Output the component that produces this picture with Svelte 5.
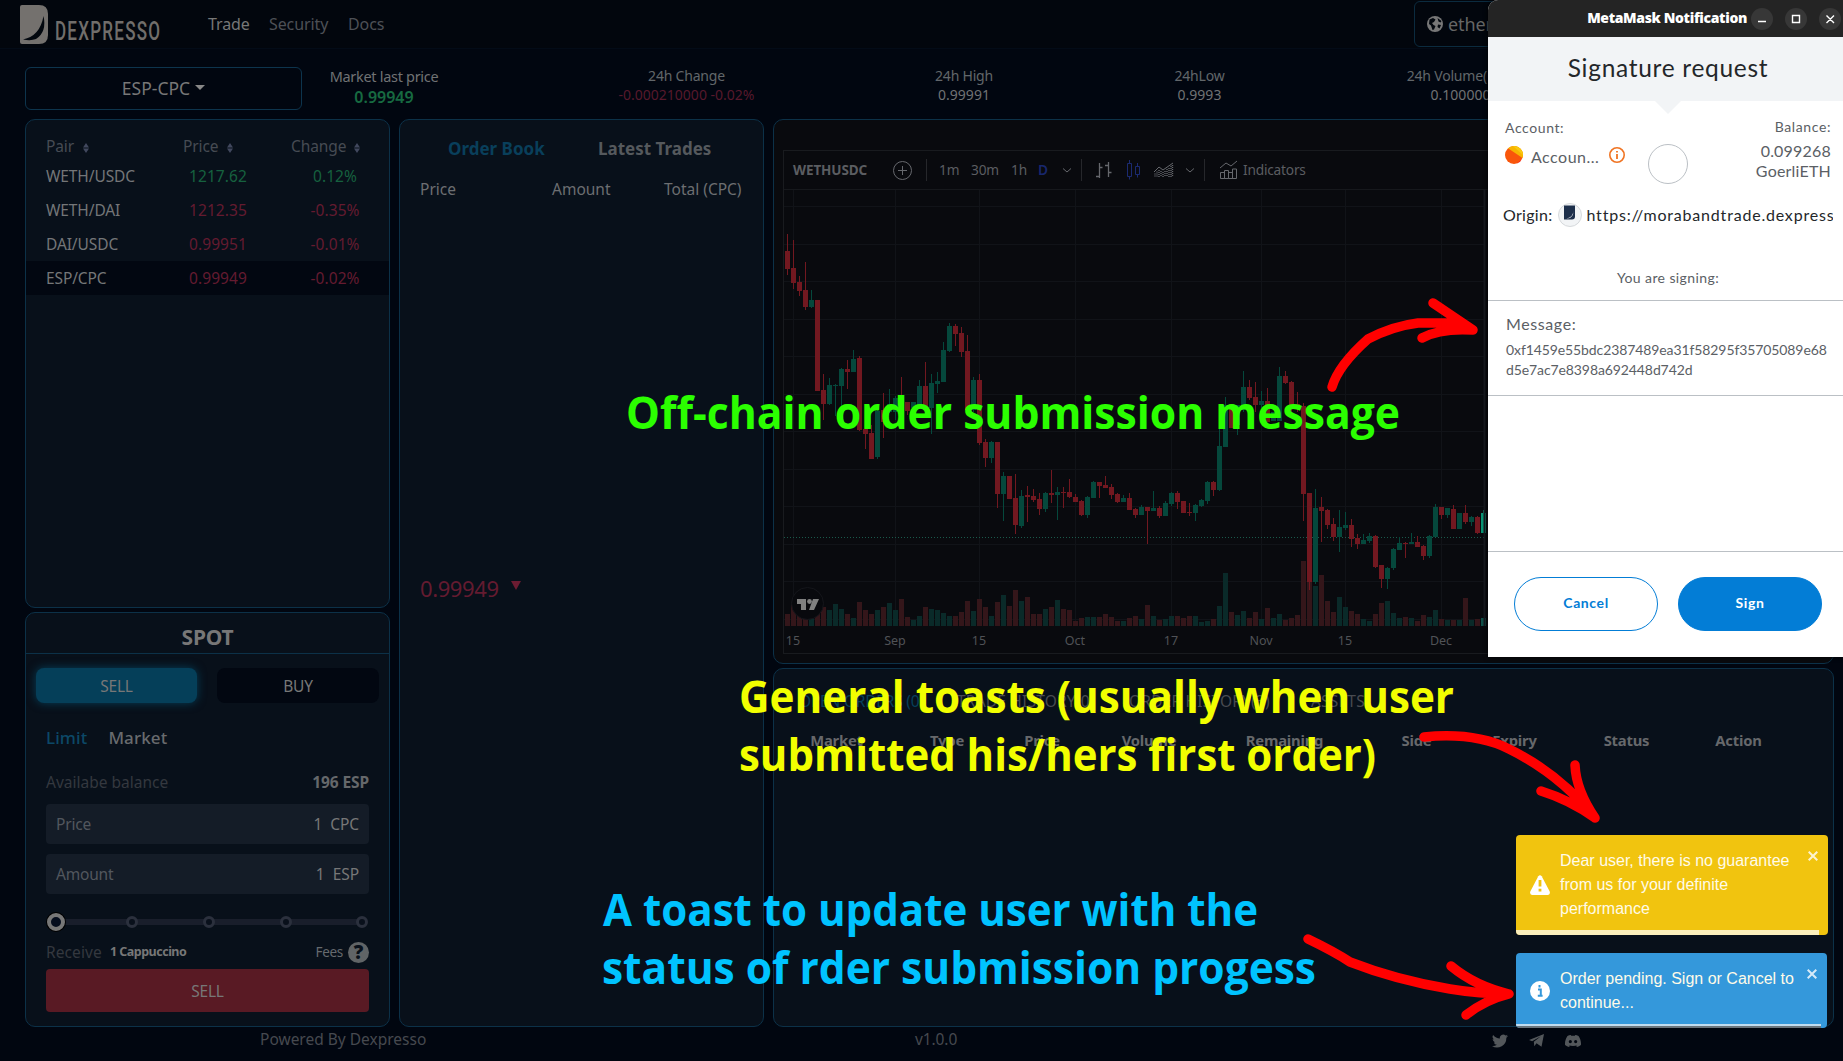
<script>
  const pairs = [
    { name: 'WETH/USDC', price: '1217.62', change: '0.12%', up: true },
    { name: 'WETH/DAI', price: '1212.35', change: '-0.35%' },
    { name: 'DAI/USDC', price: '0.99951', change: '-0.01%' },
    { name: 'ESP/CPC', price: '0.99949', change: '-0.02%', active: true }
  ];
  const orderColumns = ['Market', 'Type', 'Price', 'Volume', 'Remaining', 'Side', 'Expiry', 'Status', 'Action'];
  const axisLabels = [[1, '15'], [18, 'Sep'], [32, '15'], [48, 'Oct'], [64, '17'], [79, 'Nov'], [93, '15'], [109, 'Dec']];

  // Each candle: direction, high, body top, body bottom, low, volume bar height.
  const candles = `r 234 251 269 275 12|r 240 268 283 289 21|r 276 282 291 296 15|r 262 290 307 310 15|g 290 300 307 308 12|r 300 300 391 391 18|r 374 390 404 420 19|g 378 385 404 405 16|g 384 385 386 416 22|g 368 369 386 407 17|r 360 369 372 389 12|g 350 359 372 372 8|r 356 358 430 431 24|r 429 429 434 449 16|r 425 433 459 459 12|g 410 411 457 459 16|r 393 410 422 438 19|g 389 404 412 413 23|g 396 398 412 420 16|r 377 398 408 412 27|r 402 402 411 415 9|g 402 402 408 408 6|g 380 386 405 405 10|r 362 386 407 408 19|g 374 383 408 434 17|g 372 381 384 393 16|g 342 350 382 382 13|g 323 326 351 352 10|r 324 326 334 346 10|r 327 333 352 357 14|r 335 351 410 412 25|g 377 380 410 412 15|r 374 380 443 445 27|r 439 442 458 467 19|g 441 442 458 463 10|r 442 442 494 508 24|g 472 476 494 521 31|r 476 476 499 499 20|r 474 498 525 534 36|g 490 496 526 528 25|r 486 495 497 522 29|r 489 496 500 502 12|r 493 499 509 515 12|g 492 493 509 512 17|r 470 493 495 503 19|g 487 492 495 520 26|r 487 492 493 508 17|r 479 492 497 498 16|r 494 497 502 502 5|r 500 501 515 516 8|g 496 497 515 518 9|g 481 482 498 498 9|r 482 482 486 498 9|r 476 485 488 488 12|r 484 487 495 499 9|r 493 494 502 503 5|g 495 498 502 502 5|r 493 498 510 510 8|r 508 509 515 518 10|g 505 507 515 515 7|r 507 507 511 544 21|g 491 508 511 511 10|r 506 508 516 518 6|g 501 503 516 516 7|g 492 493 504 506 10|r 491 493 502 509 10|r 501 501 513 513 8|r 503 512 513 516 10|g 504 505 513 521 10|g 499 500 506 507 4|g 481 482 501 504 5|r 481 482 490 496 7|g 428 446 490 491 20|g 397 405 447 447 53|r 404 404 428 428 14|g 405 405 425 435 11|g 371 387 410 412 15|r 380 387 398 400 8|r 382 397 405 412 14|g 391 401 405 408 7|r 388 401 422 422 18|g 412 412 421 421 8|g 367 376 421 421 12|r 371 376 383 384 6|r 381 382 405 412 8|r 392 404 407 412 11|r 403 406 494 521 65|r 493 493 582 590 48|g 489 508 582 584 40|r 497 507 511 542 51|r 509 510 525 529 25|r 518 524 537 541 14|g 510 527 537 552 29|g 512 525 528 530 19|r 519 525 539 547 15|r 534 538 544 549 12|g 534 540 544 544 7|g 533 536 541 543 5|r 535 536 567 568 12|r 565 565 579 588 23|g 567 568 579 589 25|g 548 549 568 570 13|g 537 543 550 550 8|r 542 543 544 558 9|g 533 542 544 544 8|r 536 542 547 547 5|r 545 546 556 560 11|g 535 536 556 558 9|g 504 507 537 537 16|r 507 507 515 519 7|g 508 508 515 518 6|r 505 509 529 529 6|g 513 513 529 529 6|r 505 513 522 524 28|g 516 517 522 526 6|r 516 517 533 534 7|n 510 513 533 533 8`
    .split('|')
    .map((row, i) => {
      const [kind, ...values] = row.split(' ');
      const [high, top, bottom, low, volume] = values.map(Number);
      return { kind, high, top, bottom, low, volume, x: 787.5 + 6 * i };
    });
  const gridRows = Array.from({ length: 12 }, (_, i) => Math.round(206 + 37.5 * i) + 0.5);
</script>

{#snippet sort()}
  <svg class="sort" width="6" height="10" viewBox="0 0 6 10"><path d="M0 4.4 3 0l3 4.4zM0 5.6 3 10l3-4.4z" /></svg>
{/snippet}

<div class="app">
  <header>
    <svg class="mark" width="28" height="39" viewBox="0 0 28 39">
      <path d="M2 0h17q9 0 9 9v21q0 9-9 9H2q-2 0-2-2V2q0-2 2-2z" fill="#74716e" />
      <path d="M23.5 11Q20 31 3 34.5q8 1.500 13-.5Q27 27 23.500 11z" fill="#02070e" />
    </svg>
    <div class="wordmark"><span>DEXPRESSO</span></div>
    <nav><a class="on">Trade</a><a>Security</a><a>Docs</a></nav>
    <div class="network">
      <svg width="16" height="16" viewBox="0 0 16 16"><circle cx="8" cy="8" r="8" fill="#777" /><path d="M2.500 3.500 6 2l2.500 1.500L7 6 5 7l1.500 2 2 1L7 13.500 5.500 14 4 9.500 2 8zM10.500 2l4 3-1 1.500-2-1zM11 8.500l3 .5-1.500 3.500L10.500 11z" fill="#02070e" /></svg>
      <span>ethereum</span>
    </div>
  </header>

  <section class="stats">
    <div class="select"><span>ESP-CPC</span><i></i></div>
    <div class="stat last"><span>Market last price</span><b>0.99949</b></div>
    <div class="stat change"><span>24h Change</span><em>-0.000210000 -0.02%</em></div>
    <div class="stat"><span>24h High</span><em>0.99991</em></div>
    <div class="stat"><span>24hLow</span><em>0.9993</em></div>
    <div class="stat volume"><span>24h Volume(ESP)</span><em>0.100000</em></div>
  </section>

  <main>
    <div class="column">
      <section class="panel pairs">
        <div class="row head"><span>Pair {@render sort()}</span><span>Price {@render sort()}</span><span>Change {@render sort()}</span></div>
        {#each pairs as pair}
          <div class="row" class:up={pair.up} class:active={pair.active}>
            <span>{pair.name}</span><span>{pair.price}</span><span>{pair.change}</span>
          </div>
        {/each}
      </section>

      <section class="panel spot">
        <h2>SPOT</h2>
        <div class="sides"><button class="sell">SELL</button><button>BUY</button></div>
        <div class="form">
          <div class="kinds"><span class="on">Limit</span><span>Market</span></div>
          <div class="line balance"><span>Availabe balance</span><b>196 ESP</b></div>
          <div class="field"><span>Price</span><em>1&nbsp; CPC</em></div>
          <div class="field"><span>Amount</span><em>1&nbsp; ESP</em></div>
          <svg class="slider" width="323" height="22" viewBox="46 911 323 22">
            <path d="M56 922H362" stroke="#191e2b" stroke-width="6" />
            {#each [132, 209, 286, 362] as x}
              <circle cx={x} cy="922" r="4.500" fill="#09101b" stroke="#2b303d" stroke-width="3" />
            {/each}
            <circle cx="56" cy="922" r="7" fill="#020710" stroke="#000" stroke-width="6" />
            <circle cx="56" cy="922" r="7" fill="#050d1d" stroke="#777" stroke-width="4" />
          </svg>
          <div class="line receive"><span>Receive</span><b>1 Cappuccino</b><em>Fees</em><i>?</i></div>
          <button class="submit">SELL</button>
        </div>
      </section>
    </div>

    <section class="panel book">
      <div class="tabs"><span class="on">Order Book</span><span>Latest Trades</span></div>
      <div class="heads"><span>Price</span><span>Amount</span><span>Total (CPC)</span></div>
      <div class="mid"><span>0.99949</span><i></i></div>
    </section>

    <div class="column">
      <section class="panel market">
        <div class="chart">
          <div class="toolbar">
            <b>WETHUSDC</b>
            <svg width="512" height="38" viewBox="882 151 512 38" fill="none" stroke="#66686d">
              <circle cx="902.5" cy="170.500" r="9" /><path d="M898 170.500h9M902.500 166v9" />
              <path d="M926.500 159v22M1081.500 159v22M1204.500 159v22" stroke="#26272b" />
              <path d="m1063 168.500 4 3.500 4-3.500M1186 168.500l4 3.500 4-3.500" />
              <path d="M1099.500 163v15M1096 176.500h3.500M1099.500 167.500h3M1108.500 162v15M1105 165.500h3.500M1108.500 172.500h3" stroke-width="1.300" />
              <g stroke="#1b2a70"><path d="M1127.500 163.500h4v13h-4zM1129.500 160v3.500M1129.500 176.500v3M1135.500 166.500h4v8h-4zM1137.500 163v3.500M1137.500 174.500v3" /></g>
              <path d="m1154 172 5-5 4 3 10-7" />
              <path d="M1155 173.500v3.500M1157 171.500v5.500M1159 170v7M1161 171v6M1163 172v5M1165 171v6M1167 169v8M1169 168v9M1171 166v11M1172.500 165v12" stroke-dasharray="1 1" stroke-width="1.400" />
              <path d="m1220 168 6-5 5 3 6-5M1220.500 178.500v-6h4v6zM1224.500 178.500v-8h4v8zM1228.500 178.500v-6h4v6zM1232.500 178.500v-9.500h4v9.500z" />
            </svg>
            <div class="tools"><span>1m</span><span>30m</span><span>1h</span><span class="day">D</span><span>Indicators</span></div>
          </div>
          <svg class="plot" width="704" height="436" viewBox="784 190 704 436">
            {#each gridRows as y}<path class="grid" d="M784 {y}H1484" />{/each}
            {#each axisLabels as [i]}<path class="grid" d="M{787.5 + 6 * i} 190V626" />{/each}
            <path d="M784 537.500H1484" stroke="#1a5a4b" stroke-dasharray="1 2" />
            {#each candles as c}
              <rect class="vol {c.kind}" x={c.x - 2.5} y={626 - c.volume} width="5" height={c.volume} />
            {/each}
            {#each candles as c}
              <g class="candle {c.kind}">
                <rect x={c.x - 0.5} y={c.high} width="1" height={c.low - c.high} />
                <rect x={c.x - 2.5} y={c.top} width="5" height={Math.max(1, c.bottom - c.top)} />
              </g>
            {/each}
            <circle cx="807.5" cy="603.500" r="16" fill="#08090d" stroke="#15161b" />
            <path d="M797 599h9v11h-5v-6h-4zM813 599h6l-5 11h-5z" fill="#808080" /><circle cx="809.5" cy="601.500" r="2.400" fill="#808080" />
            <path d="M1484.500 190V627" stroke="#17191f" stroke-width="2" />
          </svg>
          <svg class="axis" width="704" height="28" viewBox="784 626 704 28">
            {#each axisLabels as [i, label]}<text x={787 + 6 * i} y="645">{label}</text>{/each}
          </svg>
        </div>
      </section>

      <section class="panel orders">
        <div class="tabs"><span class="on">OPEN ORDERS (0)</span><span>TRADE HISTORY(0)</span><span>ORDER HISTORY(3)</span><span>ASSETS</span></div>
        <div class="heads">{#each orderColumns as title}<span>{title}</span>{/each}</div>
      </section>
    </div>
  </main>

  <footer>
    <span class="powered">Powered By Dexpresso</span>
    <span class="version">v1.0.0</span>
    <div class="social">
      <svg width="16" height="16" viewBox="0 0 24 24"><path d="M24 4.600a10 10 0 0 1-2.800.8 5 5 0 0 0 2.200-2.700c-1 .5-2 1-3.100 1.200a4.900 4.900 0 0 0-8.400 4.500A14 14 0 0 1 1.700 3.100a4.900 4.900 0 0 0 1.500 6.600c-.8 0-1.500-.2-2.200-.6 0 2.300 1.600 4.400 3.900 4.900-.7.200-1.500.2-2.200.1a4.900 4.900 0 0 0 4.600 3.400A10 10 0 0 1 0 19.500a14 14 0 0 0 21.500-12.400c1-.7 1.800-1.600 2.500-2.500z" /></svg>
      <svg width="15" height="15" viewBox="0 0 24 24"><path d="M24 1.500 20 22l-8-5.500L8.500 21l-.8-7L19 5 5 13 0 11z" /></svg>
      <svg width="16" height="16" viewBox="0 0 24 24"><path fill-rule="evenodd" d="M20.300 4.400A19 19 0 0 0 15.400 3l-.6 1.200a18 18 0 0 0-5.500 0L8.600 3a19 19 0 0 0-4.900 1.400C.5 9-.3 13.600.1 18.100A20 20 0 0 0 6.100 21l1.200-2-2-1c4.300 2.100 9.100 2.100 13.400 0l-2 1 1.200 2a20 20 0 0 0 6-3c.5-5.100-.8-9.600-3.600-13.600zM8 15.300a2.300 2.300 0 1 1 0-4.800 2.300 2.300 0 0 1 0 4.800zm8 0a2.300 2.300 0 1 1 0-4.800 2.300 2.300 0 0 1 0 4.800z" /></svg>
    </div>
  </footer>

  <aside class="wallet">
    <div class="titlebar">
      <b>MetaMask Notification</b>
      <svg width="92" height="24" viewBox="0 0 92 24" fill="none" stroke="#fff" stroke-width="1.400">
        <g fill="#373737" stroke="none"><circle cx="12" cy="12" r="11" /><circle cx="46" cy="12" r="11" /><circle cx="80" cy="12" r="11" /></g>
        <path d="M8 14.500h8M42.500 8.500h7v7h-7zM76.500 8.500l7.500 7.500M84 8.500 76.500 16" />
      </svg>
    </div>
    <h1>Signature request</h1>
    <div class="account">
      <div class="who">
        <span>Account:</span>
        <div>
          <svg width="18" height="18" viewBox="0 0 18 18"><circle cx="9" cy="9" r="9" fill="#f9560b" /><path d="M3 2.300A9 9 0 0 1 17.500 12z" fill="#f7b500" /><path d="M9 0a9 9 0 0 1 9 9L8 0z" fill="#f9ca10" /><path d="M17 13a9 9 0 0 1-5 4.500z" fill="#f4222d" /></svg>
          <em>Accoun...</em>
          <svg width="18" height="18" viewBox="0 0 18 18" fill="none" stroke="#f07423" stroke-width="1.600"><circle cx="9" cy="9" r="7.200" /><path d="M9 8v5M9 5v1.600" stroke-width="1.800" /></svg>
        </div>
      </div>
      <div class="ring"></div>
      <div class="funds"><span>Balance:</span><em>0.099268</em><em>GoerliETH</em></div>
    </div>
    <div class="origin">
      <span>Origin:</span>
      <svg width="24" height="24" viewBox="0 0 24 24"><circle cx="12" cy="12" r="11.500" fill="#f2f4f6" stroke="#d6d9dc" /><path d="M6 2.500h11v11q0 3-3 3H6z" fill="#1d2f4b" /><path d="M15.500 7q0 7-7 8.500 7 .5 7-8.500z" fill="#fff" /></svg>
      <span class="url">https://morabandtrade.dexpress</span>
    </div>
    <p class="signing">You are signing:</p>
    <div class="message"><span>Message:</span><p>0xf1459e55bdc2387489ea31f58295f35705089e68<br />d5e7ac7e8398a692448d742d</p></div>
    <div class="actions"><button>Cancel</button><button class="sign">Sign</button></div>
  </aside>

  <div class="toasts">
    <div class="toast warning">
      <svg width="20" height="20" viewBox="0 0 20 20"><path d="M8.300 1.200Q10-.8 11.700 1.200L19.700 16.500Q20.500 19.500 18 20H2Q-.5 19.500.3 16.500z" fill="#fff" /><path d="M10 5v6.500M10 13.800v2.800" stroke="#f1c40f" stroke-width="2.800" /></svg>
      <p>Dear user, there is no guarantee<br />from us for your definite<br />performance</p>
      <svg class="close" width="10" height="10" viewBox="0 0 10 10"><path d="m.7.7 8.600 8.600M9.300.7.7 9.300" /></svg>
      <i></i>
    </div>
    <div class="toast pending">
      <svg width="20" height="20" viewBox="0 0 20 20"><circle cx="10" cy="10" r="10" fill="#fff" /><path d="M8 8.500h2.800v6M7.800 14.800h4.800M9.500 4v2.600" fill="none" stroke="#3498db" stroke-width="2" /></svg>
      <p>Order pending. Sign or Cancel to<br />continue...</p>
      <svg class="close" width="10" height="10" viewBox="0 0 10 10"><path d="m.7.7 8.600 8.600M9.300.7.7 9.300" /></svg>
      <i></i>
    </div>
  </div>

  <svg class="notes" width="1843" height="1061" viewBox="0 0 1843 1061">
    <g fill="#2bff00"><text x="626" y="429" textLength="774" lengthAdjust="spacingAndGlyphs">Off-chain order submission message</text></g>
    <g fill="#f2ff00">
      <text x="739" y="713" textLength="715" lengthAdjust="spacingAndGlyphs">General toasts (usually when user</text>
      <text x="739" y="771" textLength="637" lengthAdjust="spacingAndGlyphs">submitted his/hers first order)</text>
    </g>
    <g fill="#00c3ff">
      <text x="603" y="926" textLength="655" lengthAdjust="spacingAndGlyphs">A toast to update user with the</text>
      <text x="602" y="984" textLength="714" lengthAdjust="spacingAndGlyphs">status of rder submission progess</text>
    </g>
    <g class="arrows">
      <path d="M1332 387C1337 370 1350 355 1368 339Q1393 326 1418 323H1453L1473 330M1433 303 1473 330Q1440 328 1422 338" />
      <path d="M1424 737Q1475 732 1509 749 1560 774 1595 818M1575 765Q1576 790 1595 818M1541 791Q1570 800 1595 818" />
      <path d="M1308 939Q1335 952 1350 962 1396 980 1450 989 1480 994 1509 994M1451 966Q1475 986 1509 994 1485 1000 1466 1015" />
    </g>
  </svg>
</div>

<style>
  :global(body) { margin: 0; background: #010610; }
  .app { position: relative; width: 1843px; height: 1061px; overflow: hidden; display: flex; flex-direction: column; background: #010610; color: #747678; font: 15.5px/20px "Noto Sans", "Open Sans", sans-serif; letter-spacing: -0.2px; }
  em, i { font-style: normal; }
  h1, h2, p { margin: 0; }
  button { border: 0; padding: 0; font: inherit; letter-spacing: inherit; color: inherit; }
  svg { display: block; flex: none; }

  header { height: 49px; flex: none; display: flex; align-items: flex-start; padding-left: 20px; background: #02060d; border-bottom: 1px solid #030b17; box-sizing: border-box; }
  .mark { margin-top: 5px; }
  .wordmark { width: 105px; margin: 20px 0 0 7px; height: 24px; }
  .wordmark span { display: block; width: 153px; font: 500 25px/24px Roboto, sans-serif; letter-spacing: 1.8px; transform: scaleX(0.682); transform-origin: left; color: #716e6b; }
  nav { display: grid; grid-template-columns: 61px 79px 40px; margin: 14px 0 0 48px; font-size: 16px; letter-spacing: -0.1px; color: #4d5056; }
  nav .on { color: #777; }
  .network { box-sizing: border-box; width: 200px; height: 46px; margin: 1px 0 0 1026px; display: flex; align-items: center; gap: 5px; padding-left: 12px; border: 1px solid #0b2b3f; border-radius: 6px; font-size: 18px; letter-spacing: -0.1px; color: #666; }

  .stats { flex: none; height: 70px; display: grid; grid-template-columns: 277px 164px 441px 114px 357px 165px; padding-left: 25px; }
  .select { box-sizing: border-box; height: 43px; margin-top: 18px; padding-bottom: 2px; border: 1px solid #0d344d; border-radius: 6px; display: flex; align-items: center; justify-content: center; gap: 5px; font-size: 17.500px; letter-spacing: 0; color: #777; }
  .select i { border: 5.500px solid transparent; border-top-color: #888; border-bottom: 0; }
  .stat { display: flex; flex-direction: column; align-items: center; padding-top: 17px; font-size: 14px; line-height: 19px; letter-spacing: -0.2px; color: #62666a; white-space: nowrap; }
  .stat.last { padding-top: 17px; line-height: 21px; font-size: 14.500px; letter-spacing: -0.3px; }
  .last span, .stat em { color: #707274; }
  .stat em { letter-spacing: 0; }
  .last b { font-weight: 600; font-size: 16px; letter-spacing: 0; color: #176a41; }
  .stat.change em { color: #57192c; }

  main { flex: none; height: 908px; display: grid; grid-template-columns: 365px 365px 1061px; gap: 9px; padding-left: 25px; }
  .column { display: flex; flex-direction: column; gap: 4px; min-width: 0; }
  .panel { box-sizing: border-box; border: 1px solid #0c3148; border-radius: 10px; background: #08101a; overflow: hidden; }
  .pairs { height: 489px; padding-top: 13px; }
  .row { height: 34px; display: grid; grid-template-columns: 115px 114px 120px; padding-left: 20px; align-items: center; letter-spacing: -0.1px; }
  .row span:not(:first-child) { text-align: center; color: #641b30; letter-spacing: 0.1px; }
  .row.up span:not(:first-child) { color: #16613f; }
  .row.active { background: #020711; }
  .row.head { color: #464b53; height: 26px; }
  .row.head span { display: flex; align-items: center; justify-content: flex-start; gap: 9px; color: #464b53; letter-spacing: -0.1px; }
  .row.head span:nth-child(2) { padding-left: 22px; }
  .row.head span:nth-child(3) { padding-left: 16px; gap: 8px; }
  .sort { fill: #41485e; margin-top: 3px; }

  .spot { flex: 1; }
  .spot h2 { height: 40px; border-bottom: 1px solid #0c3148; text-align: center; font: 700 21px/49px "Noto Sans", sans-serif; color: #777; }
  .sides { display: grid; grid-template-columns: 161px 162px; gap: 20px; padding: 14px 10px 0; }
  .sides button { height: 35px; border-radius: 8px; background: #020711; color: #777; }
  .sides .sell { background: #053f59; box-shadow: 0 0 10px #053f59; }
  .form { padding: 0 20px; display: flex; flex-direction: column; }
  .kinds { display: flex; gap: 21px; margin-top: 25px; font-size: 17px; font-weight: 500; letter-spacing: 0.1px; color: #686b6e; }
  .kinds .on { color: #0c4867; }
  .line { display: flex; }
  .balance { margin-top: 24px; justify-content: space-between; color: #34383f; letter-spacing: 0; }
  .balance b { font-weight: 700; color: #65686b; letter-spacing: -0.1px; }
  .field { height: 40px; margin-top: 12px; padding: 0 10px; border-radius: 4px; display: flex; align-items: center; justify-content: space-between; background: #141c27; color: #52575e; }
  .field + .field { margin-top: 10px; }
  .field em { color: #777; white-space: pre; letter-spacing: -0.05px; }
  .slider { margin-top: 17px; }
  .receive { height: 22px; align-items: center; margin-top: 8px; color: #34383f; letter-spacing: 0.1px; }
  .receive b { margin: 0 auto 0 8px; font-size: 12.500px; font-weight: 700; color: #777; letter-spacing: -0.5px; }
  .receive em { font-size: 13.500px; color: #666a6e; letter-spacing: -0.3px; }
  .receive i { width: 21px; height: 21px; border-radius: 50%; margin-left: 5px; background: #606466; color: #08101a; text-align: center; font: 800 19px/21px "Open Sans", sans-serif; letter-spacing: 0; }
  .submit { height: 43px; margin-top: 6px; border-radius: 4px; background: #591a24; color: #777; }

  .book .tabs { display: grid; grid-template-columns: 150px 130px; padding: 19px 0 0 48px; font-size: 17px; font-weight: 700; letter-spacing: 0; color: #55595d; }
  .book .tabs .on { color: #093f5b; }
  .book .heads { display: grid; grid-template-columns: 132px 112px 90px; padding: 20px 0 0 20px; color: #6c6e71; letter-spacing: 0; }
  .mid { display: flex; gap: 12px; align-items: center; margin-top: 379px; padding-left: 20px; color: #641b30; font-size: 22px; letter-spacing: -0.4px; }
  .mid i { border: 5.500px solid transparent; border-top: 9px solid #6c1c32; border-bottom: 0; margin-top: -6px; }

  .market { height: 545px; background: #090a0e; padding: 30px 0 0 9px; }
  .chart { box-sizing: border-box; height: 504px; width: 710px; border: 1px solid #191b1f; }
  .toolbar { height: 38px; display: flex; position: relative; align-items: center; border-bottom: 1px solid #16181c; font-size: 14px; color: #5b5d61; }
  .toolbar b { width: 88px; padding-left: 9px; box-sizing: border-box; margin-right: 10px; font-size: 13.500px; letter-spacing: -0.1px; }
  .tools { position: absolute; left: 155px; top: 9px; display: grid; grid-template-columns: 32px 40px 27px 205px 80px; font-size: 13.700px; letter-spacing: -0.2px; }
  .tools .day { color: #18276d; font-weight: 600; }
  .grid { stroke: #111318; }
  .vol.r { fill: #34161a; } .vol.g { fill: #0a2a29; } .vol.n { fill: #10514a; }
  .candle.r { fill: #721820; } .candle.g { fill: #05483c; } .candle.n { fill: #089474; }
  .axis text { text-anchor: middle; font-size: 12.500px; fill: #505256; letter-spacing: 0; }

  .orders { flex: 1; }
  .orders .tabs { display: grid; grid-template-columns: 158px 172px 182px 80px; padding: 22px 0 0 25px; color: #484b51; white-space: nowrap; font-size: 15.500px; letter-spacing: 0.2px; }
  .orders .tabs .on { color: #07405c; letter-spacing: -0.2px; }
  .orders .heads { display: grid; grid-template-columns: 111px 110px 80px 134px 137px 127px 69px 155px 69px; justify-items: center; padding: 19px 0 0 7px; font-weight: 700; font-size: 14.800px; letter-spacing: -0.2px; color: #66686b; }

  footer { display: flex; padding-top: 2px; color: #46494f; letter-spacing: 0; }
  .powered { width: 655px; margin-left: 260px; }
  .version { width: 577px; letter-spacing: -0.1px; }
  .social { display: flex; gap: 21px; align-items: center; fill: #53575b; padding-top: 3px; }

  .wallet { position: absolute; left: 1488px; top: 0; width: 355px; height: 657px; background: #fff; color: #5b6065; font: 16px/20px Lato, "Open Sans", sans-serif; letter-spacing: 0.2px; border-top-left-radius: 10px; overflow: hidden; display: flex; flex-direction: column; box-shadow: 0 0 5px #000; }
  .titlebar { height: 37px; flex: none; display: flex; align-items: center; justify-content: flex-end; gap: 3px; background: #242424; color: #fff; font: 700 14px/20px "Noto Sans", sans-serif; letter-spacing: -0.35px; }
  .titlebar b { padding-bottom: 1px; }
  .titlebar svg { margin-right: 1px; }
  .wallet h1 { position: relative; height: 64px; flex: none; background: #f2f4f6; padding-left: 5px; box-sizing: border-box; text-align: center; font: 400 24.500px/62px Lato, sans-serif; letter-spacing: 0.7px; color: #24272a; }
  .wallet h1::after { content: ''; position: absolute; left: 167px; top: 64px; border: 13px solid transparent; border-top-color: #f2f4f6; border-bottom: 0; }
  .account { height: 95px; flex: none; display: grid; grid-template-columns: 143px 40px 1fr; padding: 16px 12px 0 17px; box-sizing: border-box; }
  .who > span, .funds span { font-size: 14px; letter-spacing: 0.6px; }
  .who > div { display: flex; align-items: center; margin-top: 4px; }
  .who em { margin: 5px 9px 0 8px; letter-spacing: 0.5px; }
  .ring { width: 38px; height: 38px; border: 1px solid #bbc0c5; border-radius: 50%; margin-top: 27px; }
  .funds { display: flex; flex-direction: column; align-items: flex-end; }
  .funds span { margin-bottom: 4px; }
  .origin { display: flex; align-items: center; padding: 7px 10px 0 15px; margin-bottom: 1px; color: #24272a; letter-spacing: 0.3px; }
  .origin svg { margin: 0 5px; }
  .url { flex: 1; overflow: hidden; white-space: nowrap; letter-spacing: 0.8px; }
  .signing { margin-top: 40px; padding: 0 0 12px 5px; text-align: center; font-size: 14px; letter-spacing: 0.4px; border-bottom: 1px solid #bbc0c5; }
  .message { height: 95px; flex: none; box-sizing: border-box; padding: 13px 0 0 18px; border-bottom: 1px solid #bbc0c5; }
  .message > span { letter-spacing: 0.6px; }
  .message p { margin-top: 6px; font-size: 14px; letter-spacing: -0.1px; }
  .actions { flex: 1; margin-top: 155px; border-top: 1px solid #bbc0c5; display: flex; gap: 20px; padding: 25px 0 0 26px; }
  .actions button { box-sizing: border-box; width: 144px; height: 54px; padding-bottom: 2px; border: 1px solid #037dd6; border-radius: 27px; background: #fff; color: #037dd6; font: 700 14px/20px Lato, sans-serif; letter-spacing: 0.6px; }
  .actions .sign { background: #037dd6; color: #fff; }

  .toasts { position: absolute; left: 1516px; top: 835px; width: 312px; display: flex; flex-direction: column; gap: 18px; }
  .toast { position: relative; box-sizing: border-box; display: flex; align-items: center; gap: 10px; padding-left: 14px; border-radius: 4px; overflow: hidden; color: #fffbe8; font: 16px/24px "Liberation Sans", Arial, sans-serif; letter-spacing: 0; white-space: nowrap; }
  .warning { height: 100px; background: #f1c40f; }
  .pending { height: 75px; width: 311px; background: #3498db; }
  .toast .close { position: absolute; right: 10px; top: 16px; stroke: #fff; stroke-opacity: 0.8; stroke-width: 2; }
  .toast i { position: absolute; left: 0; bottom: 0; width: 303px; height: 5px; background: #ffffffb8; }
  .toast.pending i { width: 305px; height: 4px; background: linear-gradient(#bfdcf0 50%, #69747c 50%); }

  .notes { position: absolute; left: 0; top: 0; pointer-events: none; }
  .notes text { font: 700 44.500px "Open Sans", "Noto Sans", sans-serif; letter-spacing: 0; }
  .arrows { fill: none; stroke: #f00; stroke-width: 9.500; stroke-linecap: round; stroke-linejoin: round; }
</style>
